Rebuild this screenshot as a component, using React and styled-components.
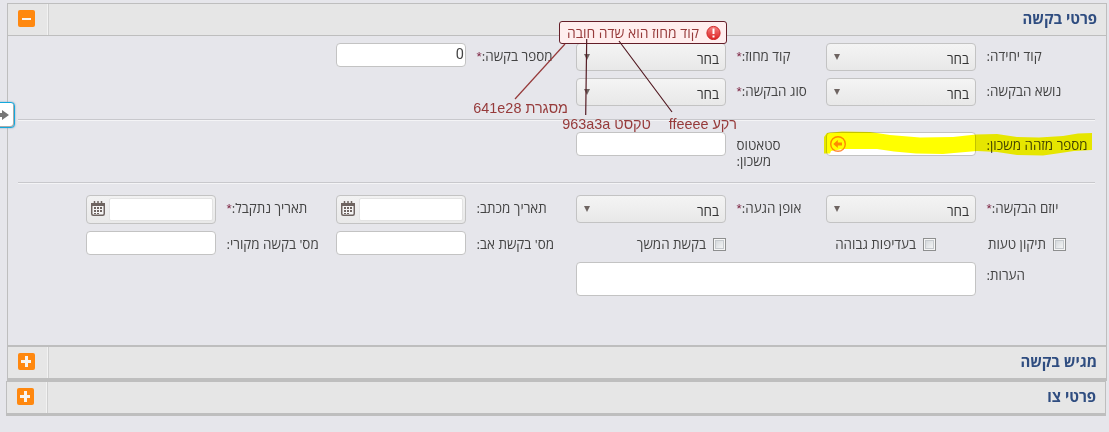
import React from 'react';
import styled, { createGlobalStyle } from 'styled-components';

const Global = createGlobalStyle`
  * { box-sizing: border-box; }
  body { margin: 0; background: #e6e6eb; overflow: hidden; }
`;

const Page = styled.main`
  position: relative;
  direction: rtl;
  width: 1109px;
  height: 432px;
  padding: 3px 2px 0 0;
  overflow: hidden;
  background: #e6e6eb;
  color: #444;
  font: 13.4px/16px 'Open Sans', 'Noto Sans', 'Liberation Sans', sans-serif;
`;

const Panel = styled.section`
  width: 1100px;
  border: 1px solid #bebebe;
  border-top-width: ${(p) => p.$topLine || 1}px;
  border-bottom-width: ${(p) => p.$bottom || 0}px;
  margin-right: ${(p) => p.$shift || 0}px;
`;

const Header = styled.header`
  display: flex;
  justify-content: space-between;
  height: ${(p) => p.$h || 31}px;
  background: #e6e6e6;
  border-bottom: ${(p) => (p.$line ? '1px solid #bebebe' : '0')};
`;

const Title = styled.h2`
  margin: 0;
  padding: 6px 9px 0 0;
  color: #2f4d80;
  font-size: 14.9px;
  line-height: 16px;
  font-weight: 700;
  white-space: nowrap;
`;

const ToggleCell = styled.div`
  width: 41px;
  padding: 6px 13px 0 0;
  border-right: 1px solid #d0d0d0;
  box-shadow: inset -1px 0 #f2f2f2;
`;

const Toggle = styled.button`
  display: block;
  width: 17px;
  height: 17px;
  padding: 0;
  border: 0;
  border-radius: 2px;
  background: #ff880f;
  svg { display: block; }
`;

const Body = styled.div`
  height: 309px;
  padding: 7px 11px 0 10px;
`;

const Rows = styled.div`
  height: ${(p) => p.$h}px;
  padding-top: ${(p) => p.$top || 0}px;
  border-bottom: ${(p) => (p.$last ? '0' : '1px solid #c8c8cc')};
  box-shadow: ${(p) => (p.$last ? 'none' : '0 1px #f4f4f6')};
`;

const Row = styled.div`
  display: grid;
  grid-template-columns: 119px 150px 100px 150px 110px 130px 120px 130px;
  height: ${(p) => p.$h}px;
  align-items: start;
`;

const Label = styled.label`
  padding-top: 5px;
  margin-left: 10.5px;
  text-align: left;
  white-space: nowrap;
`;

const StackedLabel = styled(Label)`
  justify-self: end;
  text-align: right;
  span { display: block; text-align: left; }
`;

const Star = styled.span`
  color: #7c2240;
  font: 13.3px/16px 'Liberation Sans', Arial, sans-serif;
`;

const Select = styled.div`
  display: flex;
  justify-content: space-between;
  height: 28px;
  padding: 7px 6px 0 7px;
  border: 1px solid #c3c3c3;
  border-radius: 4px;
  background: linear-gradient(#f4f4f4, #e8e8e8);
  color: #333;
`;

const Caret = styled.i`
  width: 0;
  height: 0;
  margin-top: 3px;
  border: 3.5px solid transparent;
  border-top: 6px solid #6e6461;
  border-bottom: 0;
`;

const Input = styled.div`
  direction: ltr;
  height: ${(p) => p.$h || 24}px;
  padding: 3px 1px 0;
  grid-column: ${(p) => p.$col || 'auto'};
  border: 1px solid #c3c3c3;
  border-radius: 4px;
  background: #fff;
  text-align: right;
  font-family: Roboto, 'Liberation Sans', sans-serif;
  font-size: 14.5px;
`;

const ArrowIcon = styled.svg`
  display: block;
  margin: -1px 0 0 1px;
`;

const DateBox = styled.div`
  display: flex;
  justify-content: space-between;
  height: 29px;
  padding: 2px 2px 2px 4px;
  border: 1px solid #c3c3c3;
  border-radius: 4px;
  background: linear-gradient(#f2f2f2, #e9e9e9);
  svg { display: block; margin-top: 3px; }
`;

const DateInput = styled.div`
  width: 104px;
  height: 23px;
  border: 1px solid #e3e3e3;
  border-radius: 2px;
  background: #fff;
`;

const Checks = styled.div`
  display: flex;
  grid-column: span 4;
  padding: 7px 29px 0 0;
`;

const CheckItem = styled.label`
  display: flex;
  width: ${(p) => p.$w}px;
  gap: 7px;
  white-space: nowrap;
  line-height: 13px;
`;

const Box = styled.span`
  width: 13px;
  height: 13px;
  border: 1px solid #8e8f8f;
  box-shadow: inset 0 0 0 1px #f6f6f6, inset 0 0 0 2px #c5c9cd;
  background: linear-gradient(135deg, #cdd2d6, #fbfbfb);
`;

const Tooltip = styled.div`
  position: absolute;
  left: 559px;
  top: 21px;
  width: 168px;
  height: 23px;
  display: flex;
  gap: 7px;
  padding: 3px 5px 0 0;
  border: 1px solid #641e28;
  border-radius: 3px;
  background: #ffeeee;
  color: #963a3a;
  white-space: nowrap;
  font-size: 13.9px;
  line-height: 16px;
`;

const Note = styled.span`
  position: absolute;
  right: ${(p) => 1109 - p.$right}px;
  top: ${(p) => p.$top}px;
  color: #963a3a;
  font: 14.4px/18px 'Liberation Sans', Arial, sans-serif;
  white-space: nowrap;
`;

const Overlay = styled.svg`
  position: absolute;
  left: 0;
  top: 0;
  pointer-events: none;
  mix-blend-mode: ${(p) => (p.$multiply ? 'multiply' : 'normal')};
`;

const SideTab = styled.div`
  position: absolute;
  left: -4px;
  top: 102px;
  width: 19px;
  height: 26px;
  border: 1px solid #12a8dc;
  border-radius: 4px;
  background: #fff;
  box-shadow: inset -1px -1px #aaa, 0 0 2px #7aa5c5;
  svg { position: absolute; left: 3px; top: 6px; }
`;

const ToggleButton = ({ open }) => (
  <ToggleCell>
    <Toggle>
      <svg width="17" height="17" viewBox="0 0 17 17" fill="#f7f4f0">
        {open ? <rect x="4" y="8" width="9" height="2" /> : <path d="M3 7h4V3h3v4h3v3h-3v4H7v-4H3z" />}
      </svg>
    </Toggle>
  </ToggleCell>
);

const Choice = () => (
  <Select>
    <span>בחר</span>
    <Caret />
  </Select>
);

const DateField = () => (
  <DateBox>
    <DateInput />
    <svg width="14" height="16" viewBox="0 0 14 16">
      <rect x=".75" y="2.75" width="12.5" height="11.5" rx="1.5" fill="#f4f4f4" stroke="#6e6461" strokeWidth="1.5" />
      <path d="M0 2h14v3H0z" fill="#6e6461" />
      <path d="M3.5 0v3M7 0v3M10.5 0v3" stroke="#6e6461" strokeWidth="1.5" />
      <path d="M3 6h2v2H3zM6 6h2v2H6zM9 6h2v2H9zM3 9h2v2H3zM6 9h2v2H6zM9 9h2v2H9zM3 12h2v1H3zM6 12h2v1H6z" fill="#6e6461" />
    </svg>
  </DateBox>
);

const Field = ({ text, required }) => (
  <Label>
    {text}:{required && <Star>*</Star>}
  </Label>
);

export default function App() {
  return (
    <Page>
      <Global />
      <Panel>
        <Header $h={32} $line>
          <Title>פרטי בקשה</Title>
          <ToggleButton open />
        </Header>
        <Body>
          <Rows $h={77}>
            <Row $h={35}>
              <Field text="קוד יחידה" />
              <Choice />
              <Field text="קוד מחוז" required />
              <Choice />
              <Field text="מספר בקשה" required />
              <Input>0</Input>
            </Row>
            <Row $h={28}>
              <Field text="נושא הבקשה" />
              <Choice />
              <Field text="סוג הבקשה" required />
              <Choice />
            </Row>
          </Rows>
          <Rows $h={63} $top={12}>
            <Row $h={40}>
              <Field text="מספר מזהה משכון" />
              <Input>
                <ArrowIcon width="18" height="18" viewBox="0 0 18 18">
                  <circle cx="9" cy="9" r="7.3" fill="none" stroke="#ff8a3c" strokeWidth="1.4" />
                  <path d="M4.3 9l4.5-4v2.5h4.2v3H8.8V13z" fill="#ff8a3c" />
                </ArrowIcon>
              </Input>
              <StackedLabel>
                <span>סטאטוס</span>
                <span>משכון:</span>
              </StackedLabel>
              <Input />
            </Row>
          </Rows>
          <Rows $h={150} $top={12} $last>
            <Row $h={36}>
              <Field text="יוזם הבקשה" required />
              <Choice />
              <Field text="אופן הגעה" required />
              <Choice />
              <Field text="תאריך מכתב" />
              <DateField />
              <Field text="תאריך נתקבל" required />
              <DateField />
            </Row>
            <Row $h={31}>
              <Checks>
                <CheckItem $w={130}><Box />תיקון טעות</CheckItem>
                <CheckItem $w={210}><Box />בעדיפות גבוהה</CheckItem>
                <CheckItem $w={120}><Box />בקשת המשך</CheckItem>
              </Checks>
              <Field text="מס' בקשת אב" />
              <Input />
              <Field text="מס' בקשה מקורי" />
              <Input />
            </Row>
            <Row $h={34}>
              <Field text="הערות" />
              <Input $h={34} $col="span 3" />
            </Row>
          </Rows>
        </Body>
      </Panel>
      <Panel $topLine={2} $bottom={3}>
        <Header $h={31}>
          <Title>מגיש בקשה</Title>
          <ToggleButton />
        </Header>
      </Panel>
      <Panel $bottom={3} $shift={1}>
        <Header $h={31}>
          <Title>פרטי צו</Title>
          <ToggleButton />
        </Header>
      </Panel>

      <Overlay $multiply width="1109" height="432">
        <path
          fill="#ffff00"
          d="M824 137l3-4 15-1.5 28 .5 20 3 30 2.5 33-.5 23-2.5 21-.5 20 3 22 .5 24-1.5 15-2.5 14-.5v17l-18 1-17 2.5-14 2-26-.5-20-3-20-1-23 2-11 1-27-.5-22-2-17-2.5h-34l-12 2-1 2.5h-6z"
        />
      </Overlay>

      <Tooltip>
        <svg width="15" height="15" viewBox="0 0 15 15">
          <defs>
            <linearGradient id="alert" x1="0" y1="0" x2="0" y2="1">
              <stop offset="0" stopColor="#f58080" />
              <stop offset="1" stopColor="#dd2222" />
            </linearGradient>
          </defs>
          <circle cx="7.5" cy="8" r="6.6" fill="url(#alert)" stroke="#cf2a2a" />
          <path d="M6.5 3.5h2v5.5h-2zM6.5 10.5h2v2h-2z" fill="#fff" />
        </svg>
        <span>קוד מחוז הוא שדה חובה</span>
      </Tooltip>
      <Note $right={568} $top={99}>מסגרת 641e28</Note>
      <Note $right={651} $top={115}>טקסט 963a3a</Note>
      <Note $right={737} $top={115}>רקע ffeeee</Note>
      <Overlay width="1109" height="432" fill="none">
        <path d="M565 44L515 99" stroke="#963a3a" strokeWidth="1.2" />
        <path d="M586.7 39L585.7 115M619 41L672 112" stroke="#541c24" strokeWidth="1.2" />
      </Overlay>
      <SideTab>
        <svg width="10" height="12" viewBox="0 0 10 12">
          <path d="M0 4h2V1l7 5-7 5V8H0z" fill="#777" />
        </svg>
      </SideTab>
    </Page>
  );
}
